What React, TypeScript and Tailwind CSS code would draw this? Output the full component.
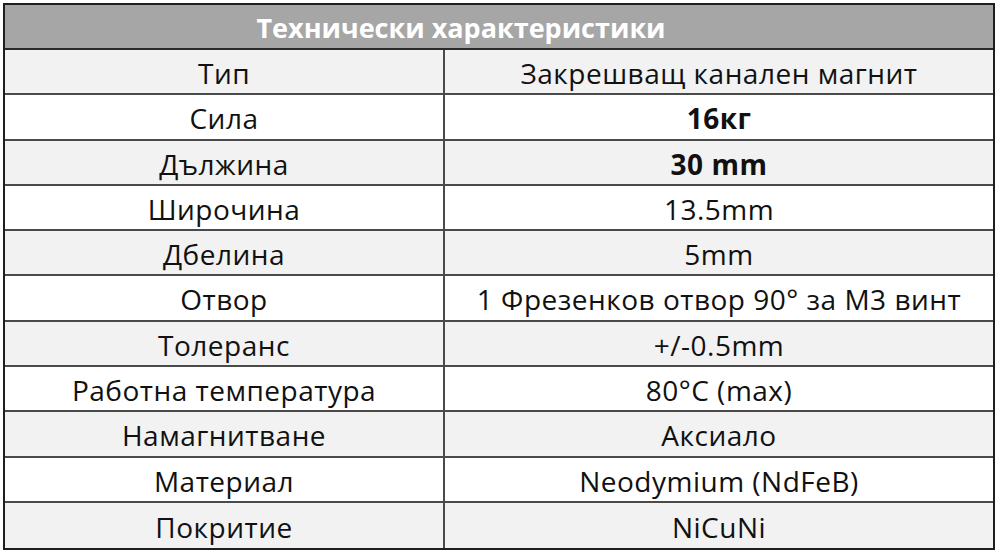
const rows: { label: string; value: string; bold?: boolean }[] = [
    { label: 'Тип', value: 'Закрешващ канален магнит' },
    { label: 'Сила', value: '16кг', bold: true },
    { label: 'Дължина', value: '30 mm', bold: true },
    { label: 'Широчина', value: '13.5mm' },
    { label: 'Дбелина', value: '5mm' },
    { label: 'Отвор', value: '1 Фрезенков отвор 90° за M3 винт' },
    { label: 'Толеранс', value: '+/-0.5mm' },
    { label: 'Работна температура', value: '80°C (max)' },
    { label: 'Намагнитване', value: 'Аксиало' },
    { label: 'Материал', value: 'Neodymium (NdFeB)' },
    { label: 'Покритие', value: 'NiCuNi' },
];

export default function App() {
    return (
        <div className="h-[555px] w-[1000px] bg-white pl-[3px] pt-[3px] font-['Open_Sans',sans-serif]">
            <div className="w-[992px] border-2 border-[#1e1e1e]">
                <div className="flex h-[45px] items-center justify-center border-b-2 border-[#2a2a2a] bg-[#a6a6a6] pr-[76px] pt-[3px] text-[27px] font-bold text-white">
                    Технически характеристики
                </div>
                {rows.map((row, i) => (
                    <div
                        key={row.label}
                        className={
                            'grid h-[45.3px] grid-cols-[440px_1fr] text-[28px] tracking-[0.5px] text-[#111] ' +
                            (i % 2 === 0 ? 'bg-[#f2f2f2]' : 'bg-white') +
                            (i < rows.length - 1 ? ' border-b-2 border-[#4a4a4a]' : '')
                        }
                    >
                        <div className="flex items-center justify-center border-r-2 border-[#4a4a4a] pt-[2px]">
                            {row.label}
                        </div>
                        <div
                            className={
                                'flex items-center justify-center pt-[2px] ' +
                                (row.bold ? 'font-bold' : '')
                            }
                        >
                            {row.value}
                        </div>
                    </div>
                ))}
            </div>
        </div>
    );
}
